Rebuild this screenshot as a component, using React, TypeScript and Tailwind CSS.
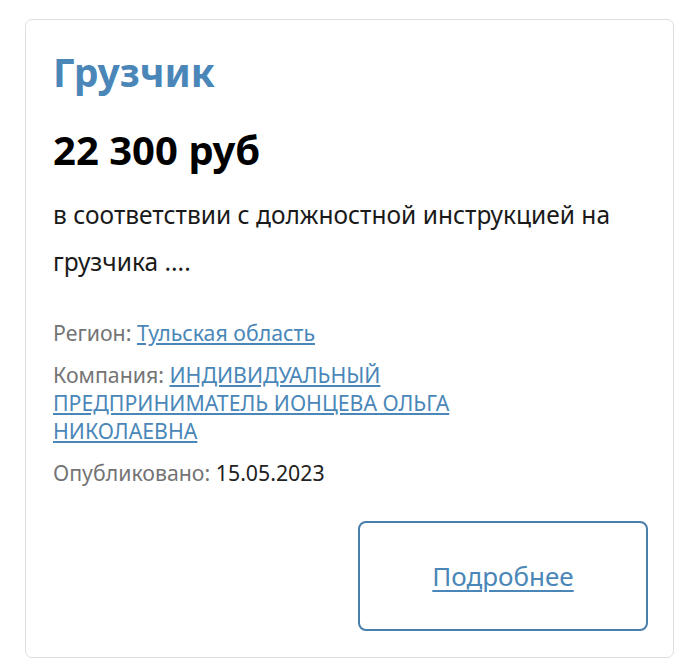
import React from 'react'

const font = { fontFamily: '"Noto Sans", "Open Sans", sans-serif' }

function MetaRow({ label, children }: { label: string; children: React.ReactNode }) {
  return (
    <p className="text-[21.3px] leading-[28px] text-[#747474]">
      {label}: {children}
    </p>
  )
}

export default function App() {
  return (
    <div className="min-h-screen bg-white pt-[19px] pl-[25px]" style={font}>
      <div className="w-[649px] h-[639px] rounded-[7px] border border-[#dedede] pl-[27px] pr-[25px] pt-[28px] pb-[26px] flex flex-col">
        <h1 className="text-[39px] leading-[48px] font-bold text-[#4a87b8]">Грузчик</h1>

        <p className="mt-[30px] text-[40px] leading-[48px] font-bold text-black">22 300 руб</p>

        <p className="mt-[17px] text-[24.5px] leading-[47px] text-[#1a1a1a]">
          в соответствии с должностной инструкцией на грузчика ....
        </p>

        <div className="mt-[34px] max-w-[460px] flex flex-col gap-[14px]">
          <MetaRow label="Регион">
            <a href="#" className="text-[#4a87b8] underline underline-offset-2">Тульская область</a>
          </MetaRow>
          <MetaRow label="Компания">
            <a href="#" className="text-[#4a87b8] underline underline-offset-2">
              ИНДИВИДУАЛЬНЫЙ ПРЕДПРИНИМАТЕЛЬ ИОНЦЕВА ОЛЬГА НИКОЛАЕВНА
            </a>
          </MetaRow>
          <MetaRow label="Опубликовано">
            <span className="text-[#222]">15.05.2023</span>
          </MetaRow>
        </div>

        <div className="mt-auto flex justify-end">
          <a
            href="#"
            className="w-[290px] h-[110px] rounded-[8px] border-2 border-[#4a7fab] flex items-center justify-center text-[26px] text-[#4a87b8] underline underline-offset-4"
          >
            Подробнее
          </a>
        </div>
      </div>
    </div>
  )
}
